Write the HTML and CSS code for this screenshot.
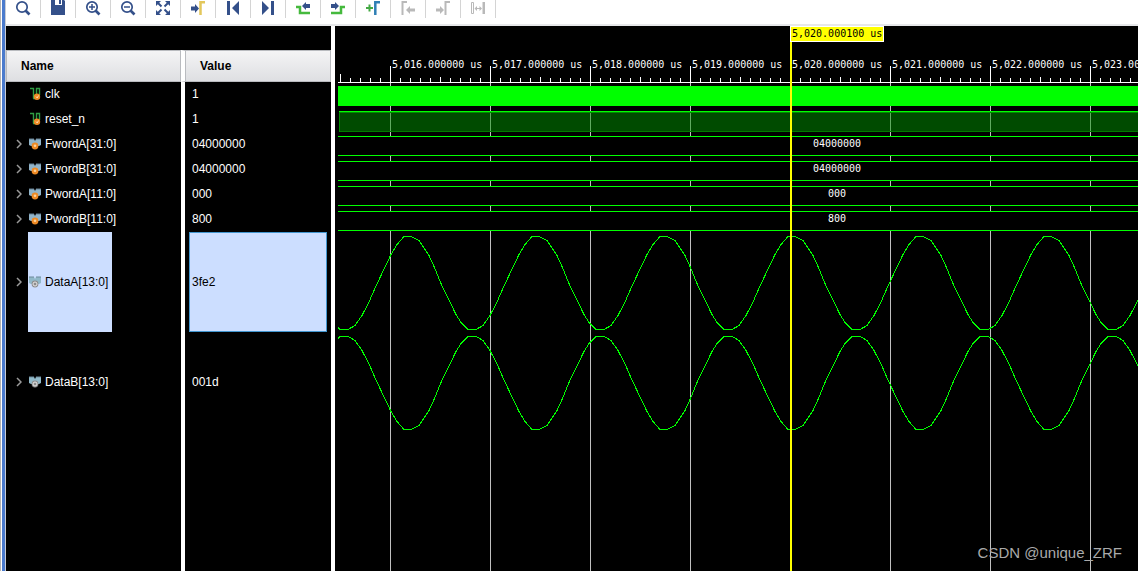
FILE: index.html
```html
<!DOCTYPE html>
<html lang="en">
<head>
<meta charset="utf-8">
<title>Waveform viewer</title>
<link rel="stylesheet" href="styles.css">
</head>
<body>
<svg class="defs" aria-hidden="true">
  <defs>
    <symbol id="bit" viewBox="0 0 14 14">
      <path d="M1 1.500H4.500V11.500M4 11.500H7.500V1.500H10.500V8" fill="none" stroke="#2f9e44" stroke-width="1.400"/>
      <circle cx="8" cy="9.800" r="3.200" fill="#ee8a25"/>
      <path d="M7 9.500L8.200 11L9.500 8.500" fill="none" stroke="#ffd9a8"/>
    </symbol>
    <symbol id="bus-in" viewBox="0 0 14 14">
      <path d="M0 2H5L6 4L7 2H12V8L10 9H2L0 8Z" fill="#91b4c9"/>
      <path d="M0 2H5M7 2H12" stroke="#647f92"/>
      <circle cx="6" cy="9" r="3.400" fill="#ee8a25"/>
      <circle cx="6" cy="8.800" r="1.300" fill="#ffd39a"/>
    </symbol>
    <symbol id="bus-out" viewBox="0 0 14 14">
      <path d="M0 2H5L6 4L7 2H12V8L10 9H2L0 8Z" fill="#91b9c9"/>
      <path d="M0 2H5M7 2H12" stroke="#6f8b9c"/>
      <circle cx="6" cy="9" r="3.400" fill="#8d8d8d"/>
      <circle cx="6" cy="9" r="2" fill="#8d8d8d" stroke="#e8e8e8"/>
    </symbol>
    <symbol id="chevron" viewBox="0 0 6 10">
      <path d="M1 1L5 5L1 9" fill="none" stroke="#9a9a9a" stroke-width="1.500"/>
    </symbol>
    <symbol id="lens" viewBox="0 0 16 16">
      <circle cx="7" cy="7" r="5.200" fill="none" stroke="#34508a" stroke-width="1.700"/>
      <path d="M10.500 10.500L14.500 14.500" stroke="#34508a" stroke-width="2.600"/>
    </symbol>
  </defs>
</svg>
<main class="viewer">
  <div class="toolbar" role="toolbar" aria-label="Waveform tools">
    <button class="tool" aria-label="Search"><svg class="icon"><use href="#lens"/></svg></button>
    <button class="tool" aria-label="Save"><svg class="icon" viewBox="0 0 16 16"><path d="M1 0H5V5H12V0H14L15 1V15H1Z" fill="#34508a"/><path d="M9 0H11V4H9Z" fill="#34508a"/></svg></button>
    <button class="tool" aria-label="Zoom in"><svg class="icon" viewBox="0 0 16 16"><use href="#lens"/><path d="M4 7H10M7 4V10" stroke="#34508a" stroke-width="1.500"/></svg></button>
    <button class="tool" aria-label="Zoom out"><svg class="icon" viewBox="0 0 16 16"><use href="#lens"/><path d="M4 7H10" stroke="#34508a" stroke-width="1.500"/></svg></button>
    <button class="tool" aria-label="Zoom fit"><svg class="icon" viewBox="0 0 16 16"><path d="M1 1H6L1 6ZM15 1V6L10 1ZM1 15V10L6 15ZM15 15H10L15 10Z" fill="#34508a"/><path d="M2 2L6.500 6.500M14 2L9.500 6.500M2 14L6.500 9.500M14 14L9.500 9.500" stroke="#34508a" stroke-width="2"/></svg></button>
    <button class="tool" aria-label="Go to cursor"><svg class="icon" viewBox="0 0 16 16"><path d="M1 6.500H5V4L9 8.500L5 13V10.500H1Z" fill="#34508a"/><path d="M10.500 15V2.200H15" fill="none" stroke="#e3c75c" stroke-width="2.500"/></svg></button>
    <button class="tool" aria-label="Go to start"><svg class="icon" viewBox="0 0 16 16"><path d="M2 1H5V15H2ZM14 1V15L7 8Z" fill="#34508a"/></svg></button>
    <button class="tool" aria-label="Go to end"><svg class="icon" viewBox="0 0 16 16"><path d="M11 1H14V15H11ZM2 1V15L9 8Z" fill="#34508a"/></svg></button>
    <button class="tool" aria-label="Previous transition"><svg class="icon" viewBox="0 0 16 16"><path d="M1 7H5V13H15" fill="none" stroke="#45b93d" stroke-width="2.500"/><path d="M7 6L11 2V4H15V8H11V10Z" fill="#34508a"/></svg></button>
    <button class="tool" aria-label="Next transition"><svg class="icon" viewBox="0 0 16 16"><path d="M1 13H11V7H15" fill="none" stroke="#45b93d" stroke-width="2.500"/><path d="M9 6L5 2V4H1V8H5V10Z" fill="#34508a"/></svg></button>
    <button class="tool" aria-label="Add marker"><svg class="icon" viewBox="0 0 16 16"><path d="M1 8H8M4.500 4.500V11.500" stroke="#45a944" stroke-width="2"/><path d="M10.300 15V2.200H15" fill="none" stroke="#2f7fb5" stroke-width="2.500"/></svg></button>
    <button class="tool" aria-label="Previous marker" disabled><svg class="icon" viewBox="0 0 16 16"><path d="M2.500 15V2H7" fill="none" stroke="#b9b9b9" stroke-width="2"/><path d="M6 10L10 6V8.500H15V11.500H10V14Z" fill="#b9b9b9"/></svg></button>
    <button class="tool" aria-label="Next marker" disabled><svg class="icon" viewBox="0 0 16 16"><path d="M10.500 15V2H15" fill="none" stroke="#b9b9b9" stroke-width="2"/><path d="M9 10L5 6V8.500H1V11.500H5V14Z" fill="#b9b9b9"/></svg></button>
    <button class="tool" aria-label="Swap cursors" disabled><svg class="icon" viewBox="0 0 16 16"><path d="M1.500 2.500H3.500V13.500H1.500Z" fill="none" stroke="#b9b9b9"/><path d="M12.500 2H15V14H12.500ZM4.500 8.500L7 6V11ZM12 8.500L9.500 6V11Z" fill="#b9b9b9"/><path d="M6 8.500H10" stroke="#b9b9b9"/></svg></button>
  </div>

  <div class="panes">
    <section class="signals">
      <table class="signal-table">
        <thead><tr><th class="name">Name</th><th class="value">Value</th></tr></thead>
        <tbody>
          <tr><td class="name"><div class="signal leaf"><span class="label"><svg class="kind"><use href="#bit"/></svg>clk</span></div></td><td class="value"><div class="reading">1</div></td></tr>
          <tr><td class="name"><div class="signal leaf"><span class="label"><svg class="kind"><use href="#bit"/></svg>reset_n</span></div></td><td class="value"><div class="reading">1</div></td></tr>
          <tr><td class="name"><div class="signal"><button class="expand" aria-label="Expand FwordA"><svg class="chevron"><use href="#chevron"/></svg></button><span class="label"><svg class="kind"><use href="#bus-in"/></svg>FwordA[31:0]</span></div></td><td class="value"><div class="reading">04000000</div></td></tr>
          <tr><td class="name"><div class="signal"><button class="expand" aria-label="Expand FwordB"><svg class="chevron"><use href="#chevron"/></svg></button><span class="label"><svg class="kind"><use href="#bus-in"/></svg>FwordB[31:0]</span></div></td><td class="value"><div class="reading">04000000</div></td></tr>
          <tr><td class="name"><div class="signal"><button class="expand" aria-label="Expand PwordA"><svg class="chevron"><use href="#chevron"/></svg></button><span class="label"><svg class="kind"><use href="#bus-in"/></svg>PwordA[11:0]</span></div></td><td class="value"><div class="reading">000</div></td></tr>
          <tr><td class="name"><div class="signal"><button class="expand" aria-label="Expand PwordB"><svg class="chevron"><use href="#chevron"/></svg></button><span class="label"><svg class="kind"><use href="#bus-in"/></svg>PwordB[11:0]</span></div></td><td class="value"><div class="reading">800</div></td></tr>
          <tr class="analog selected"><td class="name"><div class="signal"><button class="expand" aria-label="Expand DataA"><svg class="chevron"><use href="#chevron"/></svg></button><span class="label"><svg class="kind"><use href="#bus-out"/></svg>DataA[13:0]</span></div></td><td class="value"><div class="reading">3fe2</div></td></tr>
          <tr class="analog"><td class="name"><div class="signal"><button class="expand" aria-label="Expand DataB"><svg class="chevron"><use href="#chevron"/></svg></button><span class="label"><svg class="kind"><use href="#bus-out"/></svg>DataB[13:0]</span></div></td><td class="value"><div class="reading">001d</div></td></tr>
          <tr class="filler"><td class="name"></td><td class="value"></td></tr>
        </tbody>
      </table>
    </section>

    <section class="waves" aria-label="Waveforms">
      <div class="ruler">
        <span class="time">5,016.000000 us</span><span class="time">5,017.000000 us</span><span class="time">5,018.000000 us</span><span class="time">5,019.000000 us</span><span class="time">5,020.000000 us</span><span class="time">5,021.000000 us</span><span class="time">5,022.000000 us</span><span class="time">5,023.000000 us</span>
      </div>
      <div class="tracks">
        <div class="track"><div class="clock"></div></div>
        <div class="track"><div class="level"></div></div>
        <div class="track"><div class="bus">04000000</div></div>
        <div class="track"><div class="bus">04000000</div></div>
        <div class="track"><div class="bus">000</div></div>
        <div class="track"><div class="bus">800</div></div>
        <svg class="plot" aria-label="DataA and DataB analog waveforms">
          <defs>
            <pattern id="sines" width="128" height="200" patternUnits="userSpaceOnUse">
              <g fill="none" stroke="#00ff00" shape-rendering="crispEdges">
                <path d="M-6 89L2 96.500H10L17 92.500L24 82.500L31 69L38 53L53 21.500L59 11.500L66 3.500H73L81 7.500L91 22.500L96 33.500L103 50.500L118 81.500L123 89.500L130 96.500"/>
                <path d="M-6 111L2 103.500H10L17 107.500L24 117.500L31 131L38 147L53 178.500L59 188.500L66 196.500H73L81 192.500L91 177.500L96 166.500L103 149.500L118 118.500L123 110.500L130 103.500"/>
              </g>
            </pattern>
          </defs>
          <rect width="100%" height="200" fill="url(#sines)"/>
        </svg>
      </div>
      <div class="cursor"><span class="cursor-time">5,020.000100 us</span></div>
      <p class="credit">CSDN @unique_ZRF</p>
    </section>
  </div>
</main>
</body>
</html>
```
FILE: styles.css
```css
* { box-sizing: border-box; }

body {
  margin: 0;
  background: #fff;
  color: #fff;
  font: 12px/16px "Liberation Sans", Arial, sans-serif;
}

button {
  padding: 0;
  border: 0;
  background: none;
}

.defs { position: absolute; width: 0; height: 0; }

.viewer {
  display: flex;
  flex-direction: column;
  min-height: 100vh;
  padding-left: 6px;
  background: linear-gradient(to right, #b4b4b4 1px, #fff 1px 2px, #4b7bcd 2px 5px, #c8ccd4 5px 6px, #fff 6px);
}

.toolbar {
  display: flex;
  align-items: flex-start;
  height: 26px;
  border-bottom: 2px solid #e7e8ea;
}

.tool {
  display: flex;
  justify-content: center;
  width: 35px;
  height: 18px;
  border-right: 1px solid #d4d4d4;
}

.icon { width: 16px; height: 16px; }

.panes {
  display: flex;
  flex: 1;
  background: #000;
}

.signals {
  display: flex;
  flex: 0 0 329px;
  padding-top: 24px;
  border-right: 4px solid #fff;
}

.signal-table {
  width: 100%;
  border-spacing: 0;
  table-layout: fixed;
}

.name, .value { padding: 0; text-align: left; }
.name { width: 175px; }
.value { border-left: 4px solid #fff; }

th {
  height: 32px;
  border: 1px solid #b9bbbf;
  background: linear-gradient(#f4f4f5, #dedfe2);
  color: #000;
}

th.name { padding-left: 14px; }
th.value {
  padding-left: 15px;
  box-shadow: inset 1px 0 #b9bbbf;
}

.signal {
  display: flex;
  align-items: center;
  height: 24px;
  margin-bottom: 1px;
  padding-left: 10px;
}

.leaf { padding-left: 22px; }

.expand {
  display: flex;
  width: 12px;
  height: 10px;
}

.chevron { width: 6px; height: 10px; }

.label {
  display: flex;
  align-items: center;
  gap: 2px;
  height: 100%;
  padding: 0 4px 0 1px;
}

.kind { width: 14px; height: 14px; }

.reading {
  display: flex;
  align-items: center;
  height: 24px;
  margin: 0 4px 1px;
  padding-left: 3px;
}

.analog .signal, .analog .reading {
  height: 100px;
  margin-bottom: 0;
}

.selected .label, .selected .reading {
  background: #ccdeff;
  color: #000;
}

.selected .reading {
  padding-left: 2px;
  border: 1px solid #4296cf;
}

.filler { height: 100%; }

.waves {
  position: relative;
  display: flex;
  flex: 1;
  flex-direction: column;
  min-width: 0;
  padding-left: 3px;
  overflow: hidden;
  font: 10px/16px "DejaVu Sans Mono", "Liberation Mono", monospace;
}

/* Ruler layers: baseline, first tick, whole, half and tenth units. */
.ruler {
  display: flex;
  align-items: flex-end;
  height: 57px;
  padding: 0 0 10px 54px;
  background:
    linear-gradient(#fff, #fff) 0 100% / 100% 1px no-repeat,
    linear-gradient(#fff, #fff) 2px 100% / 1px 9px no-repeat,
    linear-gradient(to right, #fff 1px, transparent 1px) 52px 100% / 100px 17px repeat-x,
    linear-gradient(to right, #fff 1px, transparent 1px) 2px 100% / 100px 6px repeat-x,
    linear-gradient(to right, #fff 1px, transparent 1px) 2px 100% / 10px 5px repeat-x;
}

.time {
  flex: 0 0 100px;
  white-space: nowrap;
}

.tracks {
  flex: 1;
  background: linear-gradient(to right, #c0c0c0 1px, transparent 1px) 52px 0 / 100px 100% repeat-x;
}

.track {
  height: 25px;
  padding-top: 3px;
}

.clock {
  height: 20px;
  background: #0f0;
}

.level {
  height: 21px;
  margin-left: 1px;
  border-top: 1px solid #0f0;
  background: rgba(0, 150, 0, 0.5);
  box-shadow: inset 1px 1px #008c00, inset 0 -1px #007a00;
}

.bus {
  height: 20px;
  padding-left: 198px;
  border: solid #0f0;
  border-width: 1px 0;
  background: #000;
  line-height: 14px;
  text-align: center;
}

.plot {
  display: block;
  width: 100%;
  height: 200px;
}

.cursor {
  position: absolute;
  top: 0;
  bottom: 0;
  left: 455px;
  border-left: 2px solid #ff0;
}

.cursor-time {
  position: absolute;
  top: 0;
  left: -2px;
  height: 16px;
  padding: 0 1px;
  border: 1px solid #fff;
  background: #ff0;
  color: #000;
  line-height: 13px;
  white-space: nowrap;
}

.credit {
  position: absolute;
  right: 16px;
  bottom: 8px;
  margin: 0;
  color: #aaa;
  font: 15px/20px "Liberation Sans", Arial, sans-serif;
}
```
